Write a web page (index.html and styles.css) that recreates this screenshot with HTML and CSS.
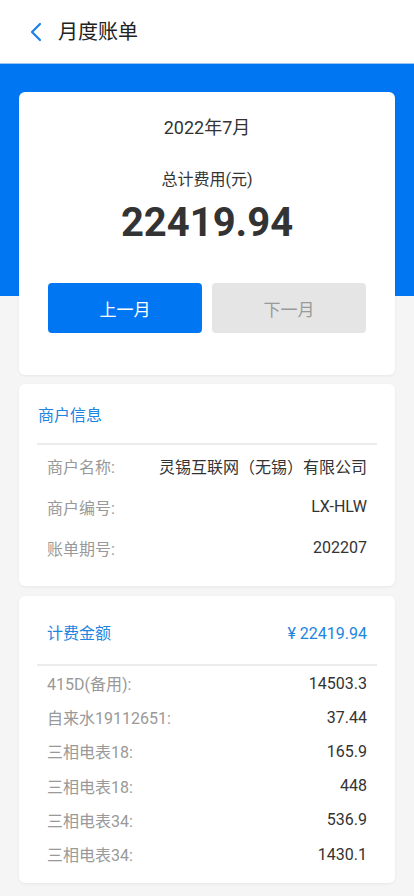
FILE: index.html
```html
<!DOCTYPE html>
<html lang="zh-CN">
<head>
<meta charset="utf-8">
<meta name="viewport" content="width=device-width, initial-scale=1">
<title>月度账单</title>
<link rel="stylesheet" href="styles.css">
</head>
<body>
<header class="topbar">
  <svg class="back" width="14" height="20" viewBox="0 0 14 20" aria-hidden="true">
    <path d="M11 2 L3 10 L11 18" fill="none" stroke="#1a7fe8" stroke-width="2.2" stroke-linecap="round" stroke-linejoin="round"/>
  </svg>
  <h1 class="title">月度账单</h1>
</header>
<main class="page">
  <section class="card summary">
    <div class="month">2022年7月</div>
    <div class="total-label">总计费用(元)</div>
    <div class="total">22419.94</div>
    <div class="btns">
      <button class="btn btn-primary">上一月</button>
      <button class="btn btn-disabled">下一月</button>
    </div>
  </section>

  <section class="card info">
    <div class="card-head info-head">商户信息</div>
    <div class="rows">
      <div class="row tall"><span class="label">商户名称:</span><span class="value">灵锡互联网（无锡）有限公司</span></div>
      <div class="row tall"><span class="label">商户编号:</span><span class="value">LX-HLW</span></div>
      <div class="row tall"><span class="label">账单期号:</span><span class="value">202207</span></div>
    </div>
  </section>

  <section class="card fees">
    <div class="card-head fees-head"><span>计费金额</span><span>¥ 22419.94</span></div>
    <div class="rows">
      <div class="row"><span class="label">415D(备用):</span><span class="value">14503.3</span></div>
      <div class="row"><span class="label">自来水19112651:</span><span class="value">37.44</span></div>
      <div class="row"><span class="label">三相电表18:</span><span class="value">165.9</span></div>
      <div class="row"><span class="label">三相电表18:</span><span class="value">448</span></div>
      <div class="row"><span class="label">三相电表34:</span><span class="value">536.9</span></div>
      <div class="row"><span class="label">三相电表34:</span><span class="value">1430.1</span></div>
    </div>
  </section>
</main>
</body>
</html>
```

FILE: styles.css
```css
* { box-sizing: border-box; }
html, body { margin: 0; padding: 0; }
body {
  width: 414px;
  min-height: 896px;
  background: #f5f5f5;
  font-family: Roboto, "Noto Sans CJK SC", sans-serif;
  color: #333;
}
.topbar {
  height: 64px;
  background: #fff;
  display: flex;
  align-items: center;
  padding-left: 29px;
  border-bottom: 1px solid #9fc6ef;
}
.back { display: block; }
.title {
  margin: 0 0 0 15px;
  font-size: 20px;
  font-weight: 400;
  color: #222;
  line-height: 28px;
}
.page {
  padding: 28px 19px 12px;
  background: linear-gradient(#0076f2 0, #0076f2 232px, #f5f5f5 232px);
  min-height: 831px;
}
.card {
  background: #fff;
  border-radius: 6px;
  box-shadow: 0 1px 3px rgba(0,0,0,0.06);
}
.summary {
  padding: 24px 29px 42px;
  text-align: center;
}
.month { font-size: 18px; line-height: 24px; color: #333; }
.total-label { margin-top: 28px; font-size: 16px; line-height: 24px; color: #333; }
.total {
  margin-top: 6px;
  font-size: 40px;
  line-height: 50px;
  font-weight: 700;
  color: #333;
}
.btns {
  margin-top: 35px;
  display: flex;
  gap: 10px;
}
.btn {
  flex: 1;
  height: 50px;
  border: 0;
  border-radius: 4px;
  font-family: inherit;
  font-size: 17px;
}
.btn-primary { background: #0076f2; color: #fff; }
.btn-disabled { background: #e5e5e5; color: #9a9a9a; }

.info { margin-top: 9px; padding: 0 18px 18px; }
.fees { margin-top: 10px; padding: 0 18px 12px; }
.card-head {
  color: #1d84e0;
  font-size: 16px;
  border-bottom: 2px solid #ececec;
}
.info-head {
  height: 61px;
  display: flex;
  align-items: center;
  padding-left: 1px;
}
.fees-head {
  display: flex;
  justify-content: space-between;
  padding: 27px 10px 19px;
  line-height: 22px;
}
.row {
  display: flex;
  justify-content: space-between;
  align-items: center;
  height: 34.2px;
  padding: 0 10px;
  font-size: 16px;
}
.row.tall { height: 41px; }
.label { color: #999; }
.value { color: #333; }
```
